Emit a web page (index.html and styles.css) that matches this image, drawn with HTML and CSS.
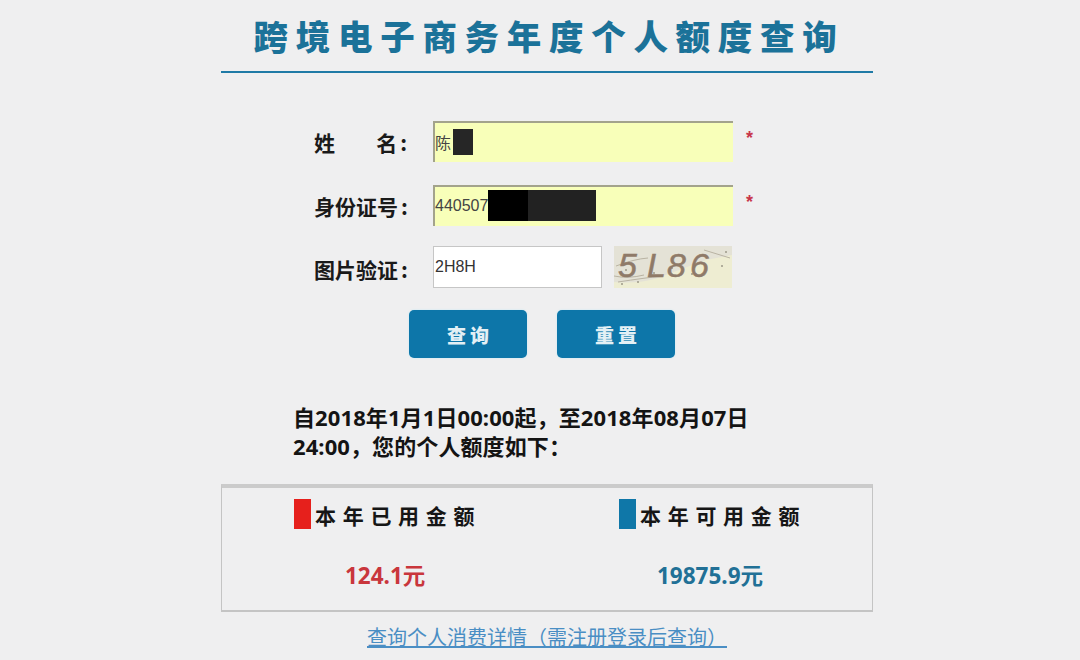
FILE: index.html
```html
<!DOCTYPE html>
<html lang="zh-CN">
<head>
<meta charset="utf-8">
<title>跨境电子商务年度个人额度查询</title>
<link rel="stylesheet" href="styles.css">
</head>
<body>
<main class="page">
  <h1 class="title">跨境电子商务年度个人额度查询</h1>
  <form class="form">
    <div class="row row-name">
      <span class="label label-name"><span>姓</span><span>名<span class="colon">:</span></span></span>
      <div class="field field-long"><span class="val val-cn">陈</span><span class="mask mask-name"></span></div>
      <span class="req">*</span>
    </div>
    <div class="row row-id">
      <span class="label">身份证号<span class="colon">:</span></span>
      <div class="field field-long"><span class="val">440507</span><span class="mask mask-id-a"></span><span class="mask mask-id-b"></span></div>
      <span class="req">*</span>
    </div>
    <div class="row row-code">
      <span class="label">图片验证<span class="colon">:</span></span>
      <div class="field field-short"><span class="val val-code">2H8H</span></div>
      <svg class="captcha" viewBox="0 0 118 42" width="118" height="42" aria-label="验证码">
        <rect width="118" height="42" fill="#e4e2d6"/>
        <path d="M0 42 L0 36 Q24 38 44 32 Q70 22 92 14 L118 9 L118 42Z" fill="#eeedd2"/>
        <path d="M2 20 Q20 13 34 12 M0 30 Q14 33 30 29 M4 36 Q30 32 48 30 M90 4 L116 12" class="captcha-line"/>
        <g class="captcha-dots">
          <circle cx="12" cy="24" r="1"/><circle cx="40" cy="27" r="1"/><circle cx="58" cy="22" r="1"/>
          <circle cx="78" cy="28" r="1"/><circle cx="108" cy="20" r="1"/><circle cx="8" cy="38" r="1"/>
          <circle cx="24" cy="36" r="1"/><circle cx="112" cy="6" r="1"/>
        </g>
        <text class="captcha-text" x="4" y="31">5</text>
        <text class="captcha-text" x="33" y="31">L</text>
        <text class="captcha-text" x="53" y="31">8</text>
        <text class="captcha-text" x="76" y="31">6</text>
      </svg>
    </div>
    <div class="actions">
      <button type="button" class="btn">查询</button>
      <button type="button" class="btn">重置</button>
    </div>
  </form>
  <p class="summary">自2018年1月1日00:00起&#xFF0C;至2018年08月07日<br>24:00&#xFF0C;您的个人额度如下&#xFF1A;</p>
  <section class="quota">
    <div class="quota-col">
      <div class="quota-head"><i class="swatch swatch-red"></i><span class="quota-name">本年已用金额</span></div>
      <div class="amount amount-red">124.1元</div>
    </div>
    <div class="quota-col">
      <div class="quota-head"><i class="swatch swatch-blue"></i><span class="quota-name">本年可用金额</span></div>
      <div class="amount amount-blue">19875.9元</div>
    </div>
  </section>
  <a class="detail" href="#">查询个人消费详情&#xFF08;需注册登录后查询&#xFF09;</a>
</main>
</body>
</html>
```

FILE: styles.css
```css
* { box-sizing: border-box; }
html, body { margin: 0; height: 660px; overflow: hidden; }
body {
  background: #efeff0;
  color: #111;
  font-family: "Liberation Sans", "Noto Sans CJK SC", sans-serif;
}
.page {
  width: 652px;
  margin-left: 221px;
  display: flex;
  flex-direction: column;
}
.title {
  margin: 0;
  height: 73px;
  padding-top: 12px;
  padding-left: 4px;
  border-bottom: 2px solid #1f7aa6;
  color: #1b7299;
  font-size: 34.5px;
  line-height: 46px;
  font-weight: 900;
  letter-spacing: 7.7px;
  text-align: center;
  white-space: nowrap;
  font-family: "Noto Sans CJK SC", sans-serif;
}
.form {
  display: flex;
  flex-direction: column;
  padding-top: 48px;
}
.row {
  display: flex;
  align-items: center;
  padding-left: 93px;
}
.row-id { margin-top: 23px; }
.row-code { margin-top: 20px; }
.label {
  width: 119px;
  font-size: 21px;
  font-weight: 700;
  color: #1a1a1a;
  font-family: "Noto Sans CJK SC", sans-serif;
  white-space: nowrap;
}
.row-code .label { position: relative; top: 2px; }
.colon { margin-left: 3px; }
.label-name {
  display: flex;
  justify-content: space-between;
  padding-right: 26px;
}
.field {
  display: flex;
  align-items: center;
  font-size: 16px;
  color: #444;
}
.field-long {
  width: 300px;
  height: 41px;
  padding-bottom: 2px;
  background: #f8ffb9;
  border-top: 2px solid #a3a38c;
  border-left: 2px solid #a3a38c;
}
.field-short {
  width: 169px;
  height: 42px;
  background: #fff;
  border: 1px solid #c6c6c6;
  color: #333;
}
.val-code { padding-left: 1px; }
.val-cn { font-family: "Noto Sans CJK SC", sans-serif; }
.mask { display: block; }
.mask-name { width: 20px; height: 26px; margin-left: 2px; background: #262626; }
.mask-id-a { width: 40px; height: 31px; background: #000; }
.mask-id-b { width: 68px; height: 31px; background: #222; }
.req {
  margin-left: 13px;
  margin-bottom: 7px;
  color: #c8364a;
  font-size: 18px;
  line-height: 18px;
  font-weight: 700;
}
.captcha { margin-left: 12px; display: block; }
.captcha-line { stroke: #b9b3a3; stroke-width: 1; fill: none; }
.captcha-dots { fill: #9d9888; }
.captcha-text {
  font-family: "Liberation Sans", sans-serif;
  font-size: 34px;
  font-style: italic;
  fill: #8f7a68;
  stroke: #8f7a68;
  stroke-width: 0.5;
}
.actions {
  display: flex;
  gap: 30px;
  margin-top: 22px;
  padding-left: 188px;
}
.btn {
  width: 118px;
  height: 48px;
  border: 0;
  border-radius: 5px;
  background: #0d76a9;
  box-shadow: 0 0 2px #bfe9f5;
  color: #e3f0f5;
  font-size: 19px;
  font-weight: 900;
  letter-spacing: 4px;
  font-family: "Noto Sans CJK SC", sans-serif;
  padding: 0 0 0 4px;
}
.summary {
  margin: 45px 0 0;
  padding-left: 72px;
  font-size: 22px;
  line-height: 29px;
  font-weight: 700;
  letter-spacing: 0.1px;
  color: #141414;
  font-family: "Noto Sans", "Noto Sans CJK SC", sans-serif;
  white-space: nowrap;
}
.quota {
  display: grid;
  grid-template-columns: 325px 325px;
  height: 128px;
  margin-top: 23px;
  border: 1px solid #c4c4c4;
  border-top: 4px solid #cbcbcb;
  border-bottom-width: 2px;
}
.quota-col {
  display: flex;
  flex-direction: column;
  padding-left: 72px;
}
.quota-head {
  display: flex;
  align-items: center;
  gap: 4px;
  margin-top: 11px;
  height: 30px;
  font-size: 21px;
  font-weight: 700;
  letter-spacing: 6.7px;
  color: #161616;
  font-family: "Noto Sans CJK SC", sans-serif;
  white-space: nowrap;
}
.quota-name { padding-top: 2px; }
.swatch { display: block; width: 17px; height: 30px; }
.swatch-red { background: #e6201c; }
.swatch-blue { background: #0f77a8; }
.amount {
  margin-top: 32px;
  font-size: 22.5px;
  line-height: 30px;
  font-weight: 700;
  font-family: "Noto Sans", "Noto Sans CJK SC", sans-serif;
}
.amount-red { color: #c9363c; padding-left: 51px; }
.amount-blue { color: #217096; padding-left: 38px; }
.detail {
  align-self: center;
  margin-top: 11px;
  color: #4a8ec4;
  font-size: 20px;
  line-height: 28px;
  text-decoration: underline;
  font-family: "Noto Sans CJK SC", sans-serif;
  white-space: nowrap;
}
```
